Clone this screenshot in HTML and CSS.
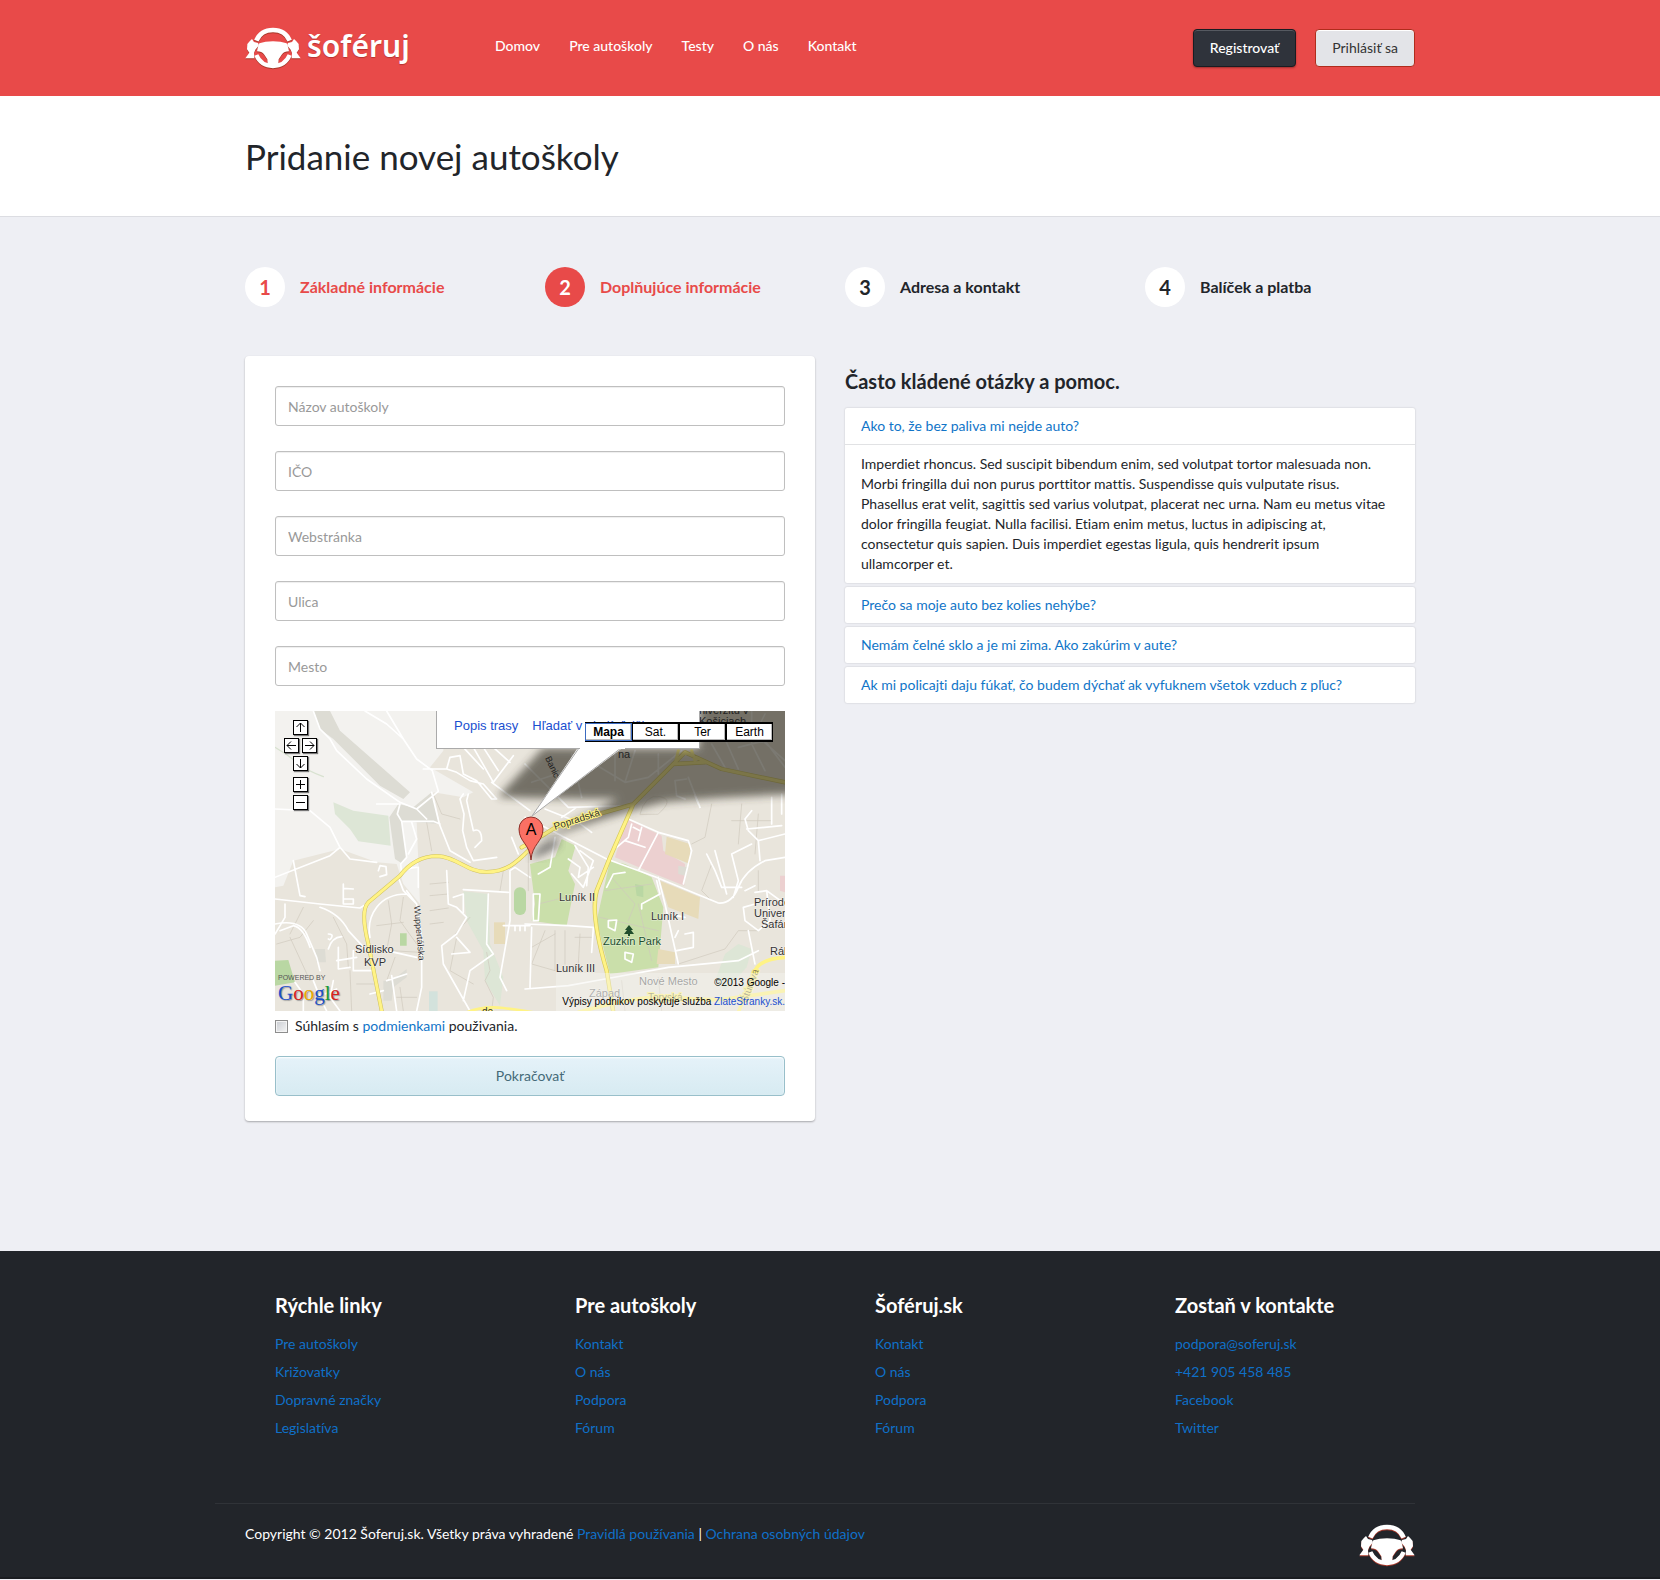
FILE: index.html
```html
<!DOCTYPE html>
<html lang="sk">
<head>
<meta charset="utf-8">
<meta name="viewport" content="width=device-width, initial-scale=1">
<title>Pridanie novej autoškoly</title>
<link rel="stylesheet" href="styles.css">
</head>
<body>
<svg class="defs" aria-hidden="true">
  <symbol id="wheel" viewBox="0 0 168 124">
    <path d="M34 40C42 21 60 8 84 8s42 13 50 32" fill="none" stroke="currentColor" stroke-width="14"/>
    <path d="M34 83C43 104 62 116 84 116s41-12 50-33" fill="none" stroke="currentColor" stroke-width="13"/>
    <path d="M21 35L27 44L39 47L42 54L31 67L27 77L28 93H1L13 76L6 66L7 50L14 42ZM147 35L141 44L129 47L126 54L137 67L141 77L140 93H167L155 76L162 66L161 50L154 42Z" fill="currentColor"/>
    <path d="M43 48Q60 42 84 42T125 48L129 58L132 72Q118 72 110 82L101 96L99 118H69L67 96L58 82Q50 72 36 72L39 58Z" fill="currentColor"/>
  </symbol>
</svg>

<header class="topbar">
  <div class="container topbar-row">
    <a class="brand" href="#"><svg class="wheel" aria-hidden="true"><use href="#wheel"/></svg><span>šoféruj</span></a>
    <nav class="nav">
      <a href="#">Domov</a><a href="#">Pre autoškoly</a><a href="#">Testy</a><a href="#">O nás</a><a href="#">Kontakt</a>
    </nav>
    <div class="account">
      <button class="btn btn-dark" type="button">Registrovať</button>
      <button class="btn btn-light" type="button">Prihlásiť sa</button>
    </div>
  </div>
</header>

<div class="page-title"><div class="container"><h1>Pridanie novej autoškoly</h1></div></div>

<main class="container main">
  <ol class="steps">
    <li class="step done"><span class="num">1</span>Základné informácie</li>
    <li class="step active"><span class="num">2</span>Doplňujúce informácie</li>
    <li class="step"><span class="num">3</span>Adresa a kontakt</li>
    <li class="step"><span class="num">4</span>Balíček a platba</li>
  </ol>

  <div class="columns">
    <form class="card">
      <div class="fields">
        <input type="text" aria-label="Názov autoškoly" placeholder="Názov autoškoly">
        <input type="text" aria-label="IČO" placeholder="IČO">
        <input type="text" aria-label="Webstránka" placeholder="Webstránka">
        <input type="text" aria-label="Ulica" placeholder="Ulica">
        <input type="text" aria-label="Mesto" placeholder="Mesto">
      </div>

      <div class="map">
        <svg class="map-canvas" viewBox="0 0 510 300" preserveAspectRatio="xMidYMid slice">
          <defs><filter id="soft" x="-20%" y="-20%" width="140%" height="140%"><feGaussianBlur stdDeviation="4"/></filter></defs>
          <rect width="510" height="300" fill="#e9e5dc"/>
          <!-- western half -->
          <g transform="translate(-5 -7) scale(.33333)" fill="none" stroke-linecap="round" stroke-linejoin="round">
            <path fill="#f3f2ef" d="M15 21H520V140L480 190L610 265L580 280L490 265L510 360L440 350L450 600L400 540L380 480L320 475L210 435L70 470L40 545L15 550Z"/>
            <path fill="#dddcd4" d="M130 21H180L210 80L420 265L400 285L330 245L190 105L150 75ZM385 300L430 310L485 265L508 360L395 352L410 460L395 478L375 465L358 340Z"/>
            <path fill="#dde6d6" d="M190 295L250 320L355 335L362 425L265 412L240 375L195 330ZM580 562L655 570L660 720L700 820L690 905L645 830L640 740L590 650Z"/>
            <path fill="#b9d7a3" d="M15 770L55 768L75 835L15 845ZM390 688H410V725H390Z"/>
            <rect x="732" y="550" width="36" height="83" rx="17" fill="#b9d7a3"/>
            <path fill="#dddcd4" d="M135 735H165L168 775H140ZM340 830H365L410 795V820L370 850L365 890H340Z"/>
            <path fill="#e7dbb9" d="M672 655H705V720H672Z"/>
            <path fill="#d3e2dc" d="M477 862H503V921H477Z"/>
            <path stroke="#d8e2d0" stroke-width="4" d="M15 130Q50 150 80 175T160 218"/>
            <path stroke="#cfc9bc" stroke-width="2" d="M470 355L485 440M490 270L515 330L570 345M480 540L535 535M480 575L535 570M480 620L535 612M480 660L520 655M355 590L365 660L350 740M400 580L390 650L440 720M320 665L400 655M365 740L450 745M375 760L350 830M380 880H440M60 700L120 830M20 720L90 700L130 650M190 640L230 720L235 790M560 700L540 800L610 840M600 640L555 690M650 745L660 800L645 830L670 880L665 920M100 610L60 690M700 500L690 560M390 850L400 921M240 800L245 921M260 840H310"/>
            <path stroke="#fff" stroke-width="5" d="M130 21L150 75L180 105L200 140L290 225L390 295L440 315L505 262L487 200L440 165L400 105L350 60L285 21M350 21L400 105M320 300L390 300L382 330L395 352H490L510 360M395 352L410 460L392 480L395 510M425 355L440 405L415 450M15 315L120 320L180 370L210 430L240 465L320 475M210 430L180 455L15 520M70 470L90 575L105 578M15 585L150 600L270 612L290 600M440 315L470 345M485 265L508 360M508 360L540 440L600 475M410 560L440 600L455 700V850L440 921M410 570Q350 570 320 610T300 700M385 520L400 560L440 600M440 490Q410 490 390 515M445 490V550M325 500L330 485L348 488L350 512L330 518M580 270L570 285L582 330L578 380L590 430L610 470L680 460M595 270L590 290L610 380Q635 370 635 410L615 430M460 195L530 195L560 205L600 230L640 240L680 285L665 285L620 230L580 210L570 155L540 160L530 195M580 130L640 195M610 130L670 235L730 155M640 130L685 200M670 130L720 175M665 235L780 320M725 400L745 450M780 520L735 490L720 500V650L690 820L710 860M580 557L715 565M530 500L535 600L560 610L590 640L560 690L515 725L520 780L600 921M550 580L580 570V625M560 700L600 745L545 750M655 570L650 720L670 750L600 800L580 890M700 665H780M735 665V680M750 665V680M765 665V680M220 540V600M220 553L250 555M220 585H250V600H220M150 610Q210 630 235 680L290 740M15 660Q90 645 110 690L140 760L150 800M30 680L70 665Q100 670 120 730M175 690Q190 690 185 700T175 705M200 770L260 760M175 735Q185 700 215 698M205 730V795L240 790M250 740V800H310M350 740L440 760M350 830L410 810M365 815L380 921M340 860L300 870M45 600V640L15 690M75 835L100 870V921M130 830L150 880L170 921M190 830L180 880L210 921M165 870L200 855"/>
            <path stroke="#cfc060" stroke-width="12" d="M336 925L295 720Q270 620 295 595L390 515Q435 457 500 456C560 458 590 504 650 504S740 475 780 435"/>
            <path stroke="#fff385" stroke-width="9" d="M336 925L295 720Q270 620 295 595L390 515Q435 457 500 456C560 458 590 504 650 504S740 475 780 435"/>
            <path stroke="#fff385" stroke-width="8" d="M590 925Q640 905 700 912T790 925"/>
          </g>
          <!-- eastern half -->
          <g transform="translate(250 -7) scale(.33333)" fill="none" stroke-linecap="round" stroke-linejoin="round">
            <path fill="#cadfaa" d="M110 405L152 425L130 500L150 540L125 665L20 650L30 600L15 480L90 460ZM255 470L300 480L380 520L415 610L400 790L255 810L215 650Z"/>
            <path fill="#ecd0d0" d="M305 345L410 395L415 440L480 480L478 545L390 510L270 460ZM765 515H780V565L765 560Z"/>
            <path fill="#e7dbb9" d="M425 398L495 420V480L420 450ZM405 530L525 580L520 645L430 610ZM400 735L450 745V780H395Z"/>
            <path fill="#dddcd4" d="M460 485L488 490L480 515L460 510Z"/>
            <path fill="#dde6d6" d="M600 750L640 720L680 735L665 790L600 860L570 830Z"/>
            <path fill="#b9d7a3" d="M330 540L355 545V580L335 575Z"/>
            <path stroke="#cfc9bc" stroke-width="2" d="M60 680L20 780L90 800M90 680V800M120 680V780M20 730L90 690M165 690L160 780M240 560L380 540M260 520L330 600L310 650M225 640L400 680M340 600L380 770M345 330Q360 270 405 278T400 330ZM460 780L600 735L640 680H700M560 300L540 400L500 420M620 350H740M650 300L640 420M700 330L690 450M10 400V560M150 700H200M700 500V560M560 480L530 560L560 590M290 830L300 921M400 820L410 921M40 600L120 580"/>
            <path stroke="#fff" stroke-width="5" d="M0 340L60 370L245 465L390 518L580 597Q620 600 640 550T720 470L780 460M60 315L160 355L200 385M110 340L155 310M160 360L190 320M310 345L400 385L490 410L500 440L475 540M400 385L340 500M325 370L345 380M300 410L360 430M320 360L310 400L275 430M350 370L340 410M400 520L420 600L460 780M395 530L405 570L350 600V615M480 690L505 685V730L455 740M455 635L480 640M460 680L450 700M0 855L130 845L240 825L430 790L640 770L700 740M0 660L130 665L205 670L200 745M20 670L15 850M130 465L165 490L160 520L205 490M165 440L205 470L175 550L140 510M150 425L190 490L185 545M25 570L45 570L40 650H25ZM90 400L75 490L40 510M245 550L265 510L300 505M250 650L275 648L270 680L250 670ZM300 745L325 750L320 775L300 765ZM545 450L570 500L590 550H650M570 440L605 570M680 420L620 450L640 530L625 580M680 320L660 345L670 380L700 410L705 470M700 410L780 390M665 375L770 365M740 280V360M770 270V330M485 225L450 230L455 275L480 285M490 220L525 310M510 275L520 300M690 600L655 610L660 650L700 680L735 650L725 560L690 565M725 560L780 600M670 680L690 780M660 560L690 545M560 120L600 190M580 60L640 195M640 130L720 110L780 190M680 21V120L720 200M720 30L690 90L780 170M20 235L200 175L300 235L370 220L470 140M140 150L170 280M270 150V230M330 140L300 235M400 150V210M0 180L130 310L320 305"/>
            <path stroke="#d6c95a" stroke-width="13" d="M265 925L245 800Q195 630 215 560L255 460L325 300L445 180L480 145L590 195L780 235M-10 430L60 390L100 365L320 302M445 180L540 175"/>
            <path stroke="#fff385" stroke-width="9" d="M265 925L245 800Q195 630 215 560L255 460L325 300L445 180L480 145L590 195L780 235M-10 430L60 390L100 365L320 302M445 180L540 175M450 180L460 140M510 170L500 140"/>
            <path stroke="#fff385" stroke-width="11" d="M640 925L690 800Q705 765 780 760M160 925Q350 870 450 880T600 885L780 860"/>
          </g>
          <path d="M223 86L268 37L424 37V-10H530V83Q460 85 390 91Q330 105 259 132Q310 105 343 88Q280 88 223 86Z" fill="#37342b" opacity=".66" filter="url(#soft)"/>
          <path d="M256 148Q262 132 283 128Q291 135 256 148Z" fill="#444" opacity=".7" filter="url(#soft)"/>
          <g class="map-text">
            <text x="80" y="242">Sídlisko</text><text x="89" y="255">KVP</text>
            <text x="284" y="190">Luník II</text><text x="376" y="209">Luník I</text><text x="281" y="261">Luník III</text>
            <text x="328" y="234" fill="#204d2c">Zuzkin Park</text>
            <text x="479" y="195">Prírodo</text><text x="479" y="206">Univerz</text><text x="486" y="217">Šafár</text><text x="495" y="244">Rák</text>
            <text x="364" y="274" fill="#666">Nové Mesto</text><text x="314" y="286" fill="#777">Západ</text>
            <text x="343" y="47" class="dim">na</text><text x="424" y="3" class="dim">niverzitu v</text><text x="424" y="14" class="dim">Košiciach</text>
            <text class="road" transform="translate(280 119) rotate(-18)">Popradská</text>
            <text transform="translate(139 195) rotate(85)" font-size="9">Wuppertálska</text>
            <text transform="translate(270 47) rotate(65)" font-size="9" class="dim">Banic</text>
            <text class="road" x="373" y="290" fill-opacity=".6">Toryská</text>
            <text class="road" x="207" y="304">do</text>
            <text class="road" fill-opacity=".6" transform="translate(472 292) rotate(-70)">Štúrova</text>
          </g>
          <path d="M354 214l4 5h-2l3 4h-4v2h-2v-2h-4l3-4h-2z" fill="#204d2c"/>
          <path d="M304 35L257 105L350 35Z" fill="#fff"/>
          <path d="M304 37L257 105L346 37" fill="none" stroke="#aaa"/>
          <path d="M256 149C255 133 244 131 244 118A12 12 0 0 1 268 118C268 131 257 133 256 149Z" fill="#fb7064" stroke="#8d3029"/>
          <text x="256" y="124" text-anchor="middle" class="pin">A</text>
        </svg>
        <div class="bubble"><a href="#">Popis trasy</a><a href="#">Hľadať v okolí ďalšie</a></div>
        <div class="map-types"><button type="button" class="on">Mapa</button><button type="button">Sat.</button><button type="button">Ter</button><button type="button">Earth</button></div>
        <div class="pan">
          <button type="button" class="up" aria-label="Hore"><svg viewBox="0 0 13 13"><path d="M6.5 11V2M2.500 6L6.500 2L10.500 6"/></svg></button>
          <button type="button" class="left" aria-label="Vľavo"><svg viewBox="0 0 13 13"><path d="M11 6.500H2M6 2.500L2 6.500L6 10.500"/></svg></button>
          <button type="button" class="right" aria-label="Vpravo"><svg viewBox="0 0 13 13"><path d="M2 6.500H11M7 2.500L11 6.500L7 10.500"/></svg></button>
          <button type="button" class="down" aria-label="Dole"><svg viewBox="0 0 13 13"><path d="M6.500 2V11M2.500 7L6.500 11L10.500 7"/></svg></button>
          <button type="button" class="in" aria-label="Priblížiť"><svg viewBox="0 0 13 13"><path d="M6.500 2V11M2 6.500H11"/></svg></button>
          <button type="button" class="out" aria-label="Oddialiť"><svg viewBox="0 0 13 13"><path d="M2 6.500H11"/></svg></button>
        </div>
        <div class="powered"><small>POWERED BY</small><div class="google"><span class="b">G</span><span class="r">o</span><span class="y">o</span><span class="b">g</span><span class="g">l</span><span class="r">e</span></div></div>
        <div class="credits"><p>©2013 Google -</p><p>Výpisy podnikov poskytuje služba <a href="#">ZlateStranky.sk.</a></p></div>
      </div>

      <div class="agree"><input type="checkbox" id="agree"><label for="agree">Súhlasím s <a href="#">podmienkami</a> použivania.</label></div>
      <button class="btn btn-next" type="submit">Pokračovať</button>
    </form>

    <section class="faq">
      <h2>Často kládené otázky a pomoc.</h2>
      <div class="faq-list">
        <div class="faq-item open">
          <a class="question" href="#">Ako to, že bez paliva mi nejde auto?</a>
          <p>Imperdiet rhoncus. Sed suscipit bibendum enim, sed volutpat tortor malesuada non. Morbi fringilla dui non purus porttitor mattis. Suspendisse quis vulputate risus. Phasellus erat velit, sagittis sed varius volutpat, placerat nec urna. Nam eu metus vitae dolor fringilla feugiat. Nulla facilisi. Etiam enim metus, luctus in adipiscing at, consectetur quis sapien. Duis imperdiet egestas ligula, quis hendrerit ipsum ullamcorper et.</p>
        </div>
        <div class="faq-item"><a class="question" href="#">Prečo sa moje auto bez kolies nehýbe?</a></div>
        <div class="faq-item"><a class="question" href="#">Nemám čelné sklo a je mi zima. Ako zakúrim v aute?</a></div>
        <div class="faq-item"><a class="question" href="#">Ak mi policajti daju fúkať, čo budem dýchať ak vyfuknem všetok vzduch z pľuc?</a></div>
      </div>
    </section>
  </div>
</main>

<footer class="footer">
  <div class="container">
    <div class="footer-cols">
      <section><h3>Rýchle linky</h3><a href="#">Pre autoškoly</a><a href="#">Križovatky</a><a href="#">Dopravné značky</a><a href="#">Legislatíva</a></section>
      <section><h3>Pre autoškoly</h3><a href="#">Kontakt</a><a href="#">O nás</a><a href="#">Podpora</a><a href="#">Fórum</a></section>
      <section><h3>Šoféruj.sk</h3><a href="#">Kontakt</a><a href="#">O nás</a><a href="#">Podpora</a><a href="#">Fórum</a></section>
      <section><h3>Zostaň v kontakte</h3><a href="#">podpora@soferuj.sk</a><a href="#">+421 905 458 485</a><a href="#">Facebook</a><a href="#">Twitter</a></section>
    </div>
    <div class="legal">
      <p>Copyright © 2012 Šoferuj.sk. Všetky práva vyhradené <a href="#">Pravidlá používania</a> | <a href="#">Ochrana osobných údajov</a></p>
      <svg class="wheel" aria-hidden="true"><use href="#wheel"/></svg>
    </div>
  </div>
</footer>
</body>
</html>
```
FILE: styles.css
```css
* { box-sizing: border-box; }
body {
  margin: 0;
  background: #eeeff4;
  color: #22252a;
  font: 14px/20px Lato, "Noto Sans", sans-serif;
  font-variant-ligatures: none;
}
h1, h2, h3, p, ol { margin: 0; padding: 0; }
a { color: #1175c8; text-decoration: none; }
button, input { font: inherit; }
.defs { display: none; }
.container { max-width: 1170px; margin: 0 auto; }

/* Header */
.topbar { background: #e84a49; }
.topbar-row { display: flex; align-items: center; height: 96px; }
.brand { display: flex; align-items: center; gap: 6px; width: 250px; color: #fff; }
.brand span { font: 600 30px/40px "Noto Sans", sans-serif; padding-bottom: 4px; text-shadow: 0 1px 1px #b43433; }
.wheel { width: 56px; height: 42px; color: #fff; filter: drop-shadow(0 1px 0 #a8382a); }
.nav { display: flex; gap: 29px; padding-bottom: 4px; }
.nav a { color: #fff; font-weight: 500; }
.account { display: flex; gap: 19px; margin-left: auto; }
.btn { height: 38px; padding: 0 16px; border: 1px solid; border-radius: 4px; cursor: pointer; }
.btn-dark { background: #2f333b; border-color: #191c22; color: #fff; font-weight: 500; box-shadow: inset 0 1px 0 #565a61, 0 1px 2px #9c2f2e; }
.btn-light { background: #e3e4e8; border-color: #b02c1c; color: #333; box-shadow: inset 0 1px 0 #fff; }

.page-title { background: #fff; border-bottom: 1px solid #dcdde2; padding: 36px 0; }
.page-title h1 { font-size: 35px; font-weight: 400; line-height: 48px; }

/* Wizard steps */
.main { padding: 50px 0 130px; }
.steps { display: grid; grid-template-columns: repeat(4, 1fr); gap: 30px; list-style: none; }
.step { display: flex; align-items: center; gap: 15px; font-size: 16px; font-weight: 700; }
.num { width: 40px; height: 40px; border-radius: 50%; background: #fff; font-size: 20px; line-height: 40px; text-align: center; }
.step.done, .step.active { color: #e84a49; }
.step.active .num { background: #e84a49; color: #fff; }

.columns { display: grid; grid-template-columns: 1fr 1fr; gap: 30px; align-items: start; margin-top: 49px; }
.card { padding: 30px 30px 25px; border-radius: 4px; background: #fff; box-shadow: 0 1px 2px rgba(0, 0, 0, .3); }
.fields { display: grid; gap: 25px; margin-bottom: 25px; }
.fields input { width: 100%; height: 40px; padding: 0 12px; border: 1px solid #bfbfbf; border-radius: 3px; color: #333; box-shadow: inset 0 1px 1px rgba(0, 0, 0, .07); }
.fields input::placeholder { color: #999; opacity: 1; }

/* Map */
.map { position: relative; height: 300px; overflow: hidden; font-family: "Liberation Sans", Arial, sans-serif; }
.map-canvas { display: block; width: 100%; height: 300px; }
.map-text { font-size: 11px; fill: #333; paint-order: stroke; stroke: rgba(255, 255, 255, .5); stroke-width: 1px; }
.map-text .road { font-size: 10px; stroke: #fff385; stroke-width: 2px; }
.map-text .dim { stroke: none; fill: #222; }
.pin { font-size: 16px; }
.bubble { position: absolute; top: 0; left: 161px; display: flex; gap: 14px; width: 264px; height: 38px; padding: 5px 0 0 17px; border: 1px solid #aaa; border-top: 0; background: #fff; font-size: 13px; white-space: nowrap; }
.bubble::after { content: ""; position: absolute; left: 143px; top: 37px; width: 45px; height: 1px; background: #fff; }
.bubble a, .credits a { color: #1a4fd0; }
.map-types { position: absolute; top: 11px; right: 12px; display: flex; border: solid #000; border-width: 1px 0; }
.map-types button { width: 47px; height: 18px; padding: 0; border: 1px solid #000; background: #fff; font-size: 12px; line-height: 14px; box-shadow: inset -1px -1px 0 #bbb; }
.map-types .on { border-color: #3b6ac0; font-weight: 700; }
.pan { position: absolute; top: 9px; left: 9px; display: grid; grid-template: 15px 15px 18px 15px 15px / repeat(4, 7px); gap: 3px 2px; }
.pan button { display: grid; width: 15px; height: 15px; padding: 0; border: 1px solid #000; background: #fff; box-shadow: 1px 1px 1px #777; }
.pan svg { width: 13px; height: 13px; fill: none; stroke: #000; }
.pan .up { grid-area: 1 / 2; }
.pan .left { grid-area: 2 / 1; }
.pan .right { grid-area: 2 / 3; }
.pan .down { grid-area: 3 / 2; }
.pan .in { grid-area: 4 / 2; }
.pan .out { grid-area: 5 / 2; }
.powered { position: absolute; left: 3px; bottom: 7px; }
.powered small { display: block; font-size: 7px; line-height: 8px; color: #555; }
.google { font: 21px/22px "Liberation Serif", serif; text-shadow: 1px 1px 1px #999; }
.google .b { color: #1a4fc8; }
.google .r { color: #d8221d; }
.google .y { color: #eba900; }
.google .g { color: #179b34; }
.credits { position: absolute; right: 0; bottom: 0; width: 229px; height: 38px; background: rgba(245, 244, 240, .45); color: #000; font-size: 10px; line-height: 19px; text-align: right; white-space: nowrap; }

.agree { display: flex; align-items: center; gap: 7px; padding: 5px 0 20px; }
.agree input { appearance: none; width: 13px; height: 13px; margin: 0; border: 1px solid #8d8d8d; background: linear-gradient(135deg, #c9ccd2, #f5f5f5); box-shadow: inset 0 0 0 1px #f4f4f4; }
.btn-next { width: 100%; height: 40px; border-color: #98bfca; color: #456a78; background: linear-gradient(#e5f2f9, #d7ebf2); box-shadow: inset 0 1px 2px #fff; }

/* FAQ */
.faq h2 { padding: 13px 0 15px; font-size: 20px; line-height: 24px; }
.faq-list { display: grid; gap: 4px; }
.faq-item { border-radius: 2px; background: #fff; box-shadow: 0 0 2px rgba(0, 0, 0, .2); }
.question { display: block; padding: 8px 16px; }
.faq-item p { padding: 9px 20px 9px 16px; border-top: 1px solid #e1e2e4; }

/* Footer */
.footer { border-bottom: 2px solid #1a1c20; background: #22252a; color: #fff; }
.footer a { color: #0f70c8; }
.footer-cols { display: grid; grid-template-columns: repeat(4, 1fr); gap: 30px; padding: 39px 0 65px; }
.footer-cols section { display: grid; gap: 8px; padding-left: 30px; }
.footer h3 { margin-bottom: 6px; font-size: 20px; line-height: 30px; }
.legal { display: flex; justify-content: space-between; margin-left: -30px; padding: 20px 0 11px 30px; border-top: 1px solid #303338; }
```
